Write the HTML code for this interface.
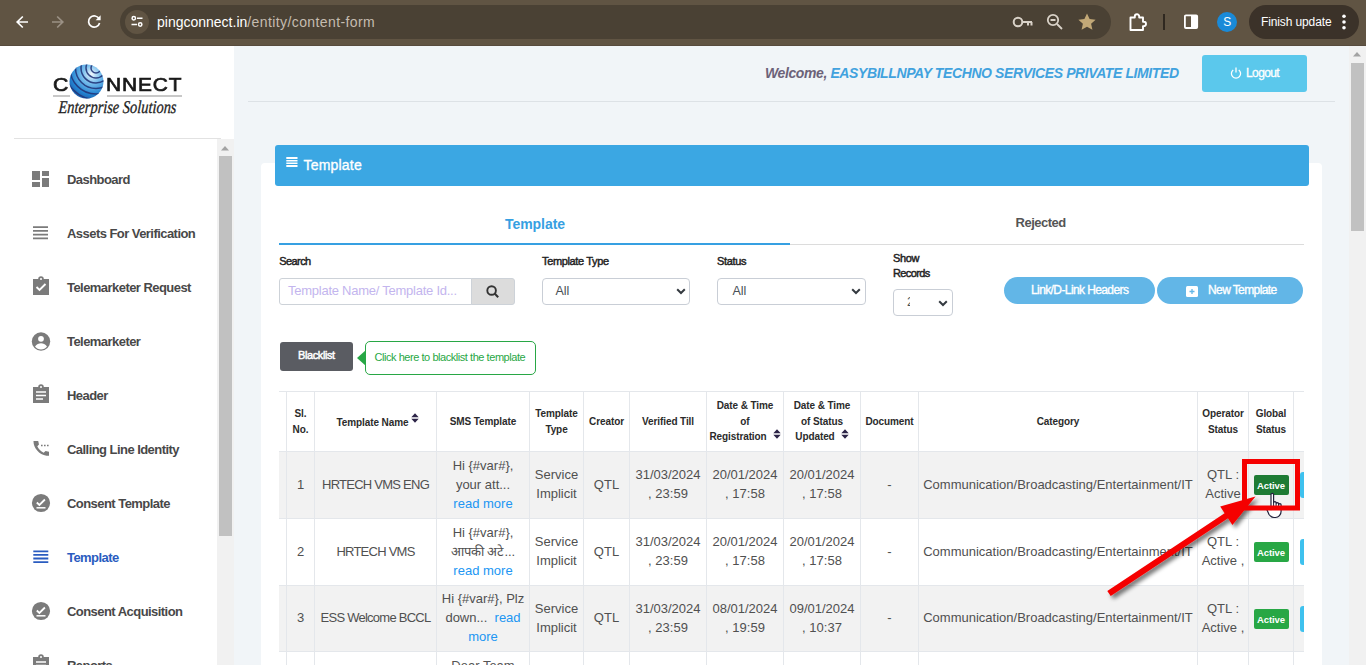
<!DOCTYPE html>
<html><head><meta charset="utf-8">
<style>
*{box-sizing:border-box;margin:0;padding:0}
html,body{width:1366px;height:665px;overflow:hidden;font-family:"Liberation Sans",sans-serif;background:#f1f5f8}
.abs{position:absolute}
#tb{position:absolute;left:0;top:0;width:1366px;height:46px;background:#605443;border-bottom:1px solid #574b3d}
#omni{position:absolute;left:120px;top:5px;width:991px;height:34px;border-radius:17px;background:#4a4134}
#side{position:absolute;left:0;top:46px;width:234px;height:619px;background:#fff}
#main{position:absolute;left:234px;top:46px;width:1132px;height:619px;background:#f1f5f8}
.mi{position:absolute;left:67px;font-size:13px;line-height:15px;letter-spacing:-0.55px;font-weight:bold;color:#484848;white-space:nowrap}
.ic{position:absolute;left:31px}
.cell{display:flex;align-items:center;justify-content:center;text-align:center;white-space:nowrap;overflow:hidden}
</style></head>
<body>
<!-- browser toolbar -->
<div id="tb">
  <svg class="abs" style="left:15px;top:15px" width="14" height="14" viewBox="0 0 14 14"><path d="M13 7H2.5M7.8 1.5L2.2 7 7.8 12.5" stroke="#fff" stroke-width="1.7" fill="none"/></svg>
  <svg class="abs" style="left:51px;top:15px" width="14" height="14" viewBox="0 0 14 14"><path d="M1 7h10.5M6.2 1.5L11.8 7 6.2 12.5" stroke="#9b9185" stroke-width="1.7" fill="none"/></svg>
  <svg class="abs" style="left:87px;top:14px" width="15" height="15" viewBox="0 0 15 15"><path d="M12.2 5A5.6 5.6 0 1 0 12.6 9" stroke="#fff" stroke-width="1.7" fill="none"/><path d="M13.6 1.2v5h-5z" fill="#fff"/></svg>
</div>
<div id="omni">
  <div class="abs" style="left:5px;top:5px;width:24px;height:24px;border-radius:12px;background:#605443"></div>
  <svg class="abs" style="left:9px;top:9px" width="16" height="16" viewBox="0 0 16 16"><circle cx="4.8" cy="4.3" r="1.7" stroke="#fff" stroke-width="1.5" fill="none"/><path d="M8 4.3h5.5M2.5 10.5h5.5" stroke="#fff" stroke-width="1.6"/><circle cx="11.2" cy="10.5" r="1.7" stroke="#fff" stroke-width="1.5" fill="none"/></svg>
  <div class="abs" style="left:37px;top:9px;font-size:14px;color:#fff;white-space:nowrap">pingconnect.in<span style="color:#c5bcb0;letter-spacing:0.4px">/entity/content-form</span></div>
</div>

<div class="abs" style="left:0;top:0">
  <svg class="abs" style="left:1012px;top:13px" width="22" height="18" viewBox="0 0 22 18"><circle cx="6" cy="9" r="4.3" stroke="#d9d2c8" stroke-width="2" fill="none"/><path d="M10 9h10M16 9v3.5M19.5 9v3.5" stroke="#d9d2c8" stroke-width="2" fill="none"/></svg>
  <svg class="abs" style="left:1045px;top:12px" width="20" height="20" viewBox="0 0 20 20"><circle cx="8" cy="8" r="5.2" stroke="#d9d2c8" stroke-width="1.8" fill="none"/><path d="M5.5 8h5M12 12l5 5" stroke="#d9d2c8" stroke-width="1.8" fill="none"/></svg>
  <svg class="abs" style="left:1077px;top:12px" width="20" height="20" viewBox="0 0 20 20"><path d="M10 1.5l2.6 5.6 6 .6-4.5 4.1 1.3 6L10 14.8l-5.4 3 1.3-6L1.4 7.7l6-.6z" fill="#c2a877"/></svg>
  <svg class="abs" style="left:1127px;top:11px" width="22" height="22" viewBox="0 0 22 22"><path d="M3.5 6.5h4.3v-1a2.2 2.2 0 0 1 4.4 0v1h3.8v4.2h.8a2.2 2.2 0 0 1 0 4.4h-.8v3.9H3.5z" stroke="#fff" stroke-width="1.9" fill="none" stroke-linejoin="round"/></svg>
  <div class="abs" style="left:1163px;top:14px;width:1.5px;height:16px;background:#2f2820"></div>
  <svg class="abs" style="left:1183px;top:14px" width="16" height="16" viewBox="0 0 16 16"><rect x="1.9" y="1.4" width="12.3" height="12.6" rx="1" stroke="#fff" stroke-width="1.8" fill="none"/><rect x="8" y="1.4" width="6.2" height="12.6" fill="#fff"/></svg>
  <div class="abs" style="left:1217.2px;top:12px;width:20px;height:20px;border-radius:50%;background:#1a8ad8;color:#fff;font-size:12px;text-align:center;line-height:20px">S</div>
  <div class="abs" style="left:1249px;top:5px;width:110px;height:34px;border-radius:17px;background:#3b3229"></div>
  <div class="abs" style="left:1261px;top:15px;font-size:12px;line-height:15px;color:#fff;white-space:nowrap;letter-spacing:-0.12px">Finish update</div>
  <svg class="abs" style="left:1340px;top:12px" width="8" height="20" viewBox="0 0 8 20"><circle cx="4" cy="4.2" r="1.8" fill="#fff"/><circle cx="4" cy="10" r="1.8" fill="#fff"/><circle cx="4" cy="15.8" r="1.8" fill="#fff"/></svg>
</div>
<div id="side">
  <!-- logo -->
  <div class="abs" style="left:52.5px;top:27.5px;font-size:19px;color:#1a1a1a;line-height:22px;-webkit-text-stroke:0.7px #1a1a1a;transform:scaleX(1.12);transform-origin:0 0">C</div>
  <div class="abs" style="left:105.5px;top:27.5px;font-size:19px;color:#1a1a1a;line-height:22px;-webkit-text-stroke:0.7px #1a1a1a;letter-spacing:0.8px;transform:scaleX(1.1);transform-origin:0 0">NNECT</div>
  <div class="abs" style="left:53px;top:49px;width:17px;height:1.5px;background:#c8c8c8"></div>
  <div class="abs" style="left:107px;top:49px;width:75px;height:1.5px;background:#c8c8c8"></div>
  <svg class="abs" style="left:69px;top:18px" width="35" height="35" viewBox="0 0 35 35"><defs><radialGradient id="gl" cx="0.65" cy="0.28" r="0.85"><stop offset="0" stop-color="#f2f8fd"/><stop offset="0.3" stop-color="#7cc0ee"/><stop offset="0.7" stop-color="#2384d2"/><stop offset="1" stop-color="#1a4f9c"/></radialGradient><clipPath id="gc"><circle cx="17.5" cy="17.5" r="17"/></clipPath></defs><circle cx="17.5" cy="17.5" r="17" fill="url(#gl)"/><g clip-path="url(#gc)" stroke="#23377a" stroke-width="1.5" fill="none" opacity="0.9"><circle cx="27" cy="4" r="5"/><circle cx="27" cy="4" r="10"/><circle cx="27" cy="4" r="15"/><circle cx="27" cy="4" r="20.5"/><circle cx="27" cy="4" r="26"/><circle cx="27" cy="4" r="31.5"/></g></svg>
  <div class="abs" style="left:58px;top:52px;line-height:19px;font-family:'Liberation Serif',serif;font-style:italic;font-size:18px;color:#1e1e1e;white-space:nowrap;letter-spacing:0px;-webkit-text-stroke:0.3px #1e1e1e;transform:scaleX(0.8) skewX(-4deg);transform-origin:0 100%">Enterprise Solutions</div>
  <div class="abs" style="left:14px;top:92px;width:207px;height:1px;background:#e2e2e2"></div>
  <!-- scrollbar -->
  <div class="abs" style="left:217px;top:93px;width:17px;height:526px;background:#f1f1f1"></div>
  <svg class="abs" style="left:220px;top:98px" width="10" height="8" viewBox="0 0 10 8"><path d="M1 6.5L5 2l4 4.5z" fill="#a3a3a3"/></svg>
  <div class="abs" style="left:219px;top:110px;width:13px;height:380px;background:#c1c1c1"></div>
<svg class="ic" style="top:124px" width="20" height="18" viewBox="0 0 20 18"><path d="M1 1h8v9H1zM11 1h7v5h-7zM1 12h8v5H1zM11 8h7v9h-7z" fill="#7b7b7b"/></svg><div class="mi" style="top:126px">Dashboard</div>
<svg class="ic" style="top:179px" width="20" height="16" viewBox="0 0 20 16"><path d="M2 2.2h15M2 5.9h15M2 9.6h15M2 13.3h15" stroke="#7b7b7b" stroke-width="1.8"/></svg><div class="mi" style="top:180px">Assets For Verification</div>
<svg class="ic" style="top:230px" width="20" height="20" viewBox="0 0 20 20"><path d="M2 3h5.2a2.8 2.8 0 0 1 5.6 0H18v16H2z" fill="#7b7b7b"/><circle cx="10" cy="3" r="1" fill="#fff"/><path d="M5.5 11l3 3 6-6" stroke="#fff" stroke-width="1.9" fill="none"/></svg><div class="mi" style="top:234px">Telemarketer Request</div>
<svg class="ic" style="top:286px" width="20" height="20" viewBox="0 0 20 20"><circle cx="10" cy="9.5" r="9.2" fill="#7b7b7b"/><circle cx="10" cy="6.8" r="2.9" fill="#fff"/><path d="M4 14.5c1.5-2.5 4-3.2 6-3.2s4.5.7 6 3.2c-1.5 2-3.5 3-6 3s-4.5-1-6-3z" fill="#fff"/></svg><div class="mi" style="top:288px">Telemarketer</div>
<svg class="ic" style="top:338px" width="20" height="20" viewBox="0 0 20 20"><path d="M2 3h5.2a2.8 2.8 0 0 1 5.6 0H18v16H2z" fill="#7b7b7b"/><circle cx="10" cy="3" r="1" fill="#fff"/><path d="M5 8h10M5 11.5h10M5 15h7" stroke="#fff" stroke-width="1.6"/></svg><div class="mi" style="top:342px">Header</div>
<svg class="ic" style="top:394px" width="20" height="18" viewBox="0 0 20 18"><path d="M2.5 1.5c0 6.5 5.5 13 13 14.2l2.5 0v-4l-3.5-.8-1.8 1.8C9.8 11.5 7.5 9 6.3 6.3L8 4.5 7.2 1H2.5z" fill="#7b7b7b"/><path d="M10 5.5h1.6M13 5.5h1.6M16 5.5h1.6" stroke="#7b7b7b" stroke-width="1.5"/></svg><div class="mi" style="top:396px">Calling Line Identity</div>
<svg class="ic" style="top:447px" width="20" height="20" viewBox="0 0 20 20"><circle cx="10" cy="10" r="9.1" fill="#7b7b7b"/><path d="M5.8 9.5l2.6 2.5 5.5-5.5" stroke="#fff" stroke-width="1.8" fill="none"/><path d="M5.5 14.8h9" stroke="#fff" stroke-width="1.5"/></svg><div class="mi" style="top:450px">Consent Template</div>
<svg class="ic" style="top:503px" width="20" height="16" viewBox="0 0 20 16"><path d="M2.3 2.3h15M2.3 5.9h15M2.3 9.5h15M2.3 13.1h15" stroke="#2a5cc0" stroke-width="1.8"/></svg><div class="mi" style="top:504px;color:#2a5cc0">Template</div>
<svg class="ic" style="top:555px" width="20" height="20" viewBox="0 0 20 20"><circle cx="10" cy="10" r="9.1" fill="#7b7b7b"/><path d="M5.8 9.5l2.6 2.5 5.5-5.5" stroke="#fff" stroke-width="1.8" fill="none"/><path d="M5.5 14.8h9" stroke="#fff" stroke-width="1.5"/></svg><div class="mi" style="top:558px">Consent Acquisition</div>
<svg class="ic" style="top:608px" width="20" height="20" viewBox="0 0 20 20"><path d="M2 3h5.2a2.8 2.8 0 0 1 5.6 0H18v16H2z" fill="#7b7b7b"/><circle cx="10" cy="3" r="1" fill="#fff"/><path d="M5 8h10M5 11.5h10" stroke="#fff" stroke-width="1.6"/></svg><div class="mi" style="top:612px">Reports</div>
</div>
<div id="main">
  <div class="abs" style="left:531px;top:19px;font-size:14px;line-height:16px;font-weight:bold;font-style:italic;white-space:nowrap;letter-spacing:-0.4px"><span style="color:#6c6278">Welcome, </span><span style="color:#41a2de">EASYBILLNPAY TECHNO SERVICES PRIVATE LIMITED</span></div>
  <div class="abs" style="left:968px;top:9px;width:105px;height:37px;border-radius:3px;background:#5bc8ec"></div>
  <svg class="abs" style="left:996px;top:21px" width="12" height="12" viewBox="0 0 12 12"><path d="M3.2 2.9A4.6 4.6 0 1 0 8.8 2.9" stroke="#fff" stroke-width="1.3" fill="none"/><path d="M6 0.6v5" stroke="#fff" stroke-width="1.3"/></svg>
  <div class="abs" style="left:1012px;top:20px;font-size:12px;line-height:14px;color:#fff;letter-spacing:-0.6px;-webkit-text-stroke:0.3px #fff">Logout</div>
  <div class="abs" style="left:14px;top:55px;width:1087px;height:1px;background:#dde2e6"></div>
  <!-- card -->
  <div class="abs" style="left:27px;top:117px;width:1061px;height:510px;background:#fff;border-radius:4px"></div>
  <div class="abs" style="left:41px;top:99px;width:1034px;height:41px;background:#3ba7e3;border-radius:3px"></div>
  <svg class="abs" style="left:51.5px;top:110px" width="12" height="12" viewBox="0 0 12 12"><rect x="0.3" y="1" width="11.2" height="2" fill="#fff"/><rect x="0.3" y="4" width="11.2" height="1.5" fill="#fff"/><rect x="0.3" y="6.5" width="11.2" height="1.5" fill="#fff"/><rect x="0.3" y="9" width="11.2" height="2" fill="#fff"/></svg>
  <div class="abs" style="left:69.5px;top:111px;font-size:14px;line-height:17px;color:#fff;letter-spacing:0.2px;-webkit-text-stroke:0.35px #fff">Template</div>
<!-- CONTENT -->
<div class="abs" style="left:271.0px;top:170.1px;font-size:14px;line-height:16px;font-weight:bold;color:#36a0e2;white-space:nowrap;letter-spacing:-0.05px;">Template</div>
<div class="abs" style="left:781.6px;top:169.0px;font-size:13px;line-height:15px;font-weight:bold;color:#555;white-space:nowrap;letter-spacing:-0.5px;">Rejected</div>
<div class="abs" style="left:45.0px;top:197.0px;width:511px;height:2px;background:#36a0e2"></div>
<div class="abs" style="left:556.0px;top:198.0px;width:514px;height:1px;background:#dcdcdc"></div>
<div class="abs" style="left:45.3px;top:209.0px;font-size:11px;line-height:13px;color:#222;white-space:nowrap;letter-spacing:-0.6px;-webkit-text-stroke:0.45px #222;">Search</div>
<div class="abs" style="left:308.0px;top:209.0px;font-size:11px;line-height:13px;color:#222;white-space:nowrap;letter-spacing:-0.35px;-webkit-text-stroke:0.45px #222;">Template Type</div>
<div class="abs" style="left:483.0px;top:209.3px;font-size:11px;line-height:13px;color:#222;white-space:nowrap;letter-spacing:-0.35px;-webkit-text-stroke:0.45px #222;">Status</div>
<div class="abs" style="left:659.0px;top:205.7px;font-size:11px;line-height:13px;color:#222;white-space:nowrap;letter-spacing:-0.35px;-webkit-text-stroke:0.45px #222;">Show</div>
<div class="abs" style="left:659.0px;top:220.7px;font-size:11px;line-height:13px;color:#222;white-space:nowrap;letter-spacing:-0.6px;-webkit-text-stroke:0.45px #222;">Records</div>
<div class="abs" style="left:45.0px;top:232.0px;width:193px;height:27px;border:1px solid #cdd2d8;border-radius:3px 0 0 3px;background:#fff"></div>
<div class="abs" style="left:54.0px;top:236.5px;font-size:13px;line-height:15px;color:#c3b5ee;white-space:nowrap;letter-spacing:-0.25px;">Template Name/ Template Id...</div>
<div class="abs" style="left:237.0px;top:232.0px;width:44px;height:27px;border:1px solid #cdd2d8;border-radius:0 3px 3px 0;background:#dcdcdc"></div>
<svg class="abs" style="left:252px;top:239px" width="14" height="13" viewBox="0 0 14 13"><circle cx="5.6" cy="5.5" r="4.3" stroke="#333" stroke-width="1.9" fill="none"/><path d="M8.6 8.6l3.6 3.6" stroke="#333" stroke-width="2.1"/></svg>
<div class="abs" style="left:308.0px;top:232.0px;width:148px;height:27px;border:1px solid #c9ced6;border-radius:4px;background:#fff"></div>
<svg class="abs" style="left:441.5px;top:242px" width="10" height="7" viewBox="0 0 10 7"><path d="M1.2 1.3L5 5l3.8-3.7" stroke="#343a40" stroke-width="2" fill="none"/></svg>
<div class="abs" style="left:321.5px;top:238.2px;font-size:12.5px;line-height:15px;color:#495057;white-space:nowrap;letter-spacing:0px;">All</div>
<div class="abs" style="left:483.0px;top:232.0px;width:149px;height:27px;border:1px solid #c9ced6;border-radius:4px;background:#fff"></div>
<svg class="abs" style="left:617px;top:242px" width="10" height="7" viewBox="0 0 10 7"><path d="M1.2 1.3L5 5l3.8-3.7" stroke="#343a40" stroke-width="2" fill="none"/></svg>
<div class="abs" style="left:498.5px;top:238.2px;font-size:12.5px;line-height:15px;color:#495057;white-space:nowrap;letter-spacing:0px;">All</div>
<div class="abs" style="left:659.0px;top:243.0px;width:60px;height:27px;border:1px solid #c9ced6;border-radius:4px;background:#fff"></div>
<svg class="abs" style="left:704px;top:253.5px" width="10" height="7" viewBox="0 0 10 7"><path d="M1.2 1.3L5 5l3.8-3.7" stroke="#343a40" stroke-width="2" fill="none"/></svg>
<div class="abs" style="left:673px;top:251px;width:3px;height:10px;overflow:hidden;font-size:12.5px;line-height:10px;color:#495057">2</div>
<div class="abs" style="left:770.0px;top:231.0px;width:151px;height:27px;border-radius:14px;background:#62b6e7"></div>
<div class="abs" style="left:797.0px;top:237.3px;font-size:12px;line-height:14px;color:#fff;white-space:nowrap;letter-spacing:-0.6px;-webkit-text-stroke:0.35px #fff;">Link/D-Link Headers</div>
<div class="abs" style="left:923.0px;top:231.0px;width:146px;height:27px;border-radius:14px;background:#62b6e7"></div>
<div class="abs" style="left:951.5px;top:239.5px;width:12.5px;height:11.5px;border-radius:1.5px;background:#fff"></div>
<svg class="abs" style="left:953px;top:241px" width="10" height="9" viewBox="0 0 10 9"><path d="M2.5 4.5h5M5 2v5" stroke="#62b6e7" stroke-width="1.3"/></svg>
<div class="abs" style="left:974.0px;top:237.3px;font-size:12px;line-height:14px;color:#fff;white-space:nowrap;letter-spacing:-0.6px;-webkit-text-stroke:0.35px #fff;">New Template</div>
<div class="abs" style="left:46.0px;top:296.0px;width:73px;height:29px;border-radius:3px;background:#5a5c62"></div>
<div class="abs" style="left:64.0px;top:303.0px;font-size:11px;line-height:13px;color:#fff;white-space:nowrap;letter-spacing:-0.4px;-webkit-text-stroke:0.45px #fff;">Blacklist</div>
<svg class="abs" style="left:122px;top:303px" width="12" height="18" viewBox="0 0 12 18"><path d="M1 9L10 1v16z" fill="#28a745"/></svg>
<div class="abs" style="left:131.0px;top:295.0px;width:171px;height:34px;border:1px solid #28a745;border-radius:5px;background:#fff"></div>
<div class="abs" style="left:140.5px;top:304.9px;font-size:11px;line-height:13px;color:#28a745;white-space:nowrap;letter-spacing:-0.45px;">Click here to blacklist the template</div>
<div class="abs" style="left:45px;top:405px;width:1025px;height:67px;background:#f2f2f2"></div>
<div class="abs" style="left:45px;top:472px;width:1025px;height:67px;background:#fff"></div>
<div class="abs" style="left:45px;top:539px;width:1025px;height:66px;background:#f2f2f2"></div>
<div class="abs" style="left:45px;top:605px;width:1025px;height:69px;background:#fff"></div>
<div class="abs" style="left:45px;top:345px;width:1025px;height:1px;background:#e4e7eb"></div>
<div class="abs" style="left:45px;top:405px;width:1025px;height:1px;background:#e4e7eb"></div>
<div class="abs" style="left:45px;top:472px;width:1025px;height:1px;background:#e4e7eb"></div>
<div class="abs" style="left:45px;top:539px;width:1025px;height:1px;background:#e4e7eb"></div>
<div class="abs" style="left:45px;top:605px;width:1025px;height:1px;background:#e4e7eb"></div>
<div class="abs" style="left:52px;top:345px;width:1px;height:274px;background:#e4e7eb"></div>
<div class="abs" style="left:80px;top:345px;width:1px;height:274px;background:#e4e7eb"></div>
<div class="abs" style="left:202px;top:345px;width:1px;height:274px;background:#e4e7eb"></div>
<div class="abs" style="left:295px;top:345px;width:1px;height:274px;background:#e4e7eb"></div>
<div class="abs" style="left:349px;top:345px;width:1px;height:274px;background:#e4e7eb"></div>
<div class="abs" style="left:395px;top:345px;width:1px;height:274px;background:#e4e7eb"></div>
<div class="abs" style="left:472px;top:345px;width:1px;height:274px;background:#e4e7eb"></div>
<div class="abs" style="left:549px;top:345px;width:1px;height:274px;background:#e4e7eb"></div>
<div class="abs" style="left:626px;top:345px;width:1px;height:274px;background:#e4e7eb"></div>
<div class="abs" style="left:684px;top:345px;width:1px;height:274px;background:#e4e7eb"></div>
<div class="abs" style="left:963px;top:345px;width:1px;height:274px;background:#e4e7eb"></div>
<div class="abs" style="left:1014px;top:345px;width:1px;height:274px;background:#e4e7eb"></div>
<div class="abs" style="left:1059px;top:345px;width:1px;height:274px;background:#e4e7eb"></div>
<div class="abs cell" style="left:46px;top:346px;width:6px;height:59px;font-size:10px;line-height:15.5px;font-weight:bold;color:#2b2b2b;letter-spacing:-0.1px"><div></div></div>
<div class="abs cell" style="left:53px;top:346px;width:27px;height:59px;font-size:10px;line-height:15.5px;font-weight:bold;color:#2b2b2b;letter-spacing:-0.1px"><div>Sl.<br>No.</div></div>
<div class="abs cell" style="left:81px;top:346px;width:121px;height:59px;font-size:10px;line-height:15.5px;font-weight:bold;color:#2b2b2b;letter-spacing:-0.1px;padding-left:5px"><div>Template Name<svg width="8" height="10" viewBox="0 0 8 10" style="vertical-align:2.5px;margin-left:3px;display:inline-block"><path d="M0.3 4.2L4 0.3 7.7 4.2zM0.3 5.8L4 9.7 7.7 5.8z" fill="#2d2548"/></svg></div></div>
<div class="abs cell" style="left:203px;top:346px;width:92px;height:59px;font-size:10px;line-height:15.5px;font-weight:bold;color:#2b2b2b;letter-spacing:-0.1px"><div>SMS Template</div></div>
<div class="abs cell" style="left:296px;top:346px;width:53px;height:59px;font-size:10px;line-height:15.5px;font-weight:bold;color:#2b2b2b;letter-spacing:-0.1px"><div>Template<br>Type</div></div>
<div class="abs cell" style="left:350px;top:346px;width:45px;height:59px;font-size:10px;line-height:15.5px;font-weight:bold;color:#2b2b2b;letter-spacing:-0.1px"><div>Creator</div></div>
<div class="abs cell" style="left:396px;top:346px;width:76px;height:59px;font-size:10px;line-height:15.5px;font-weight:bold;color:#2b2b2b;letter-spacing:-0.1px"><div>Verified Till</div></div>
<div class="abs cell" style="left:473px;top:346px;width:76px;height:59px;font-size:10px;line-height:15.5px;font-weight:bold;color:#2b2b2b;letter-spacing:-0.1px"><div>Date &amp; Time<br>of<br>Registration<svg width="8" height="10" viewBox="0 0 8 10" style="vertical-align:1px;margin-left:6px;display:inline-block"><path d="M0.3 4.2L4 0.3 7.7 4.2zM0.3 5.8L4 9.7 7.7 5.8z" fill="#2d2548"/></svg></div></div>
<div class="abs cell" style="left:550px;top:346px;width:76px;height:59px;font-size:10px;line-height:15.5px;font-weight:bold;color:#2b2b2b;letter-spacing:-0.1px"><div>Date &amp; Time<br>of Status<br>Updated<svg width="8" height="10" viewBox="0 0 8 10" style="vertical-align:1px;margin-left:6px;display:inline-block"><path d="M0.3 4.2L4 0.3 7.7 4.2zM0.3 5.8L4 9.7 7.7 5.8z" fill="#2d2548"/></svg></div></div>
<div class="abs cell" style="left:627px;top:346px;width:57px;height:59px;font-size:10px;line-height:15.5px;font-weight:bold;color:#2b2b2b;letter-spacing:-0.1px"><div>Document</div></div>
<div class="abs cell" style="left:685px;top:346px;width:278px;height:59px;font-size:10px;line-height:15.5px;font-weight:bold;color:#2b2b2b;letter-spacing:-0.1px"><div>Category</div></div>
<div class="abs cell" style="left:964px;top:346px;width:50px;height:59px;font-size:10px;line-height:15.5px;font-weight:bold;color:#2b2b2b;letter-spacing:-0.1px"><div>Operator<br>Status</div></div>
<div class="abs cell" style="left:1015px;top:346px;width:44px;height:59px;font-size:10px;line-height:15.5px;font-weight:bold;color:#2b2b2b;letter-spacing:-0.1px"><div>Global<br>Status</div></div>
<div class="abs cell" style="left:1060px;top:346px;width:36px;height:59px;font-size:10px;line-height:15.5px;font-weight:bold;color:#2b2b2b;letter-spacing:-0.1px"><div></div></div>
<div class="abs cell" style="left:46px;top:406px;width:6px;height:66px;font-size:13px;line-height:19px;color:#505050;padding-bottom:2px"><div></div></div>
<div class="abs cell" style="left:53px;top:406px;width:27px;height:66px;font-size:13px;line-height:19px;color:#505050;padding-bottom:2px"><div>1</div></div>
<div class="abs cell" style="left:81px;top:406px;width:121px;height:66px;font-size:13px;line-height:19px;color:#505050;padding-bottom:2px;letter-spacing:-0.75px"><div>HRTECH VMS ENG</div></div>
<div class="abs cell" style="left:203px;top:406px;width:92px;height:66px;font-size:13px;line-height:19px;color:#505050;padding-bottom:2px"><div>Hi {#var#},<br>your att...<br><span style="color:#2196f3">read more</span></div></div>
<div class="abs cell" style="left:296px;top:406px;width:53px;height:66px;font-size:13px;line-height:19px;color:#505050;padding-bottom:2px"><div>Service<br>Implicit</div></div>
<div class="abs cell" style="left:350px;top:406px;width:45px;height:66px;font-size:13px;line-height:19px;color:#505050;padding-bottom:2px"><div>QTL</div></div>
<div class="abs cell" style="left:396px;top:406px;width:76px;height:66px;font-size:13px;line-height:19px;color:#505050;padding-bottom:2px"><div>31/03/2024<br>, 23:59</div></div>
<div class="abs cell" style="left:473px;top:406px;width:76px;height:66px;font-size:13px;line-height:19px;color:#505050;padding-bottom:2px"><div>20/01/2024<br>, 17:58</div></div>
<div class="abs cell" style="left:550px;top:406px;width:76px;height:66px;font-size:13px;line-height:19px;color:#505050;padding-bottom:2px"><div>20/01/2024<br>, 17:58</div></div>
<div class="abs cell" style="left:627px;top:406px;width:57px;height:66px;font-size:13px;line-height:19px;color:#505050;padding-bottom:2px"><div>-</div></div>
<div class="abs cell" style="left:685px;top:406px;width:278px;height:66px;font-size:13px;line-height:19px;color:#505050;padding-bottom:2px"><div>Communication/Broadcasting/Entertainment/IT</div></div>
<div class="abs cell" style="left:964px;top:406px;width:50px;height:66px;font-size:13px;line-height:19px;color:#505050;padding-bottom:2px"><div>QTL :<br>Active</div></div>
<div class="abs cell" style="left:1015px;top:406px;width:44px;height:66px;font-size:13px;line-height:19px;color:#505050;padding-bottom:2px"><div><div style="width:35px;height:20px;margin-top:2px;border-radius:2px;background:#1e7b34;color:#fff;font-size:9.5px;font-weight:bold;line-height:22px;letter-spacing:-0.1px">Active</div></div></div>
<div class="abs cell" style="left:1060px;top:406px;width:36px;height:66px;font-size:13px;line-height:19px;color:#505050;padding-bottom:2px"><div></div></div>
<div class="abs cell" style="left:46px;top:473px;width:6px;height:66px;font-size:13px;line-height:19px;color:#505050;padding-bottom:2px"><div></div></div>
<div class="abs cell" style="left:53px;top:473px;width:27px;height:66px;font-size:13px;line-height:19px;color:#505050;padding-bottom:2px"><div>2</div></div>
<div class="abs cell" style="left:81px;top:473px;width:121px;height:66px;font-size:13px;line-height:19px;color:#505050;padding-bottom:2px;letter-spacing:-0.75px"><div>HRTECH VMS</div></div>
<div class="abs cell" style="left:203px;top:473px;width:92px;height:66px;font-size:13px;line-height:19px;color:#505050;padding-bottom:2px"><div>Hi {#var#},<br>आपकी अटे...<br><span style="color:#2196f3">read more</span></div></div>
<div class="abs cell" style="left:296px;top:473px;width:53px;height:66px;font-size:13px;line-height:19px;color:#505050;padding-bottom:2px"><div>Service<br>Implicit</div></div>
<div class="abs cell" style="left:350px;top:473px;width:45px;height:66px;font-size:13px;line-height:19px;color:#505050;padding-bottom:2px"><div>QTL</div></div>
<div class="abs cell" style="left:396px;top:473px;width:76px;height:66px;font-size:13px;line-height:19px;color:#505050;padding-bottom:2px"><div>31/03/2024<br>, 23:59</div></div>
<div class="abs cell" style="left:473px;top:473px;width:76px;height:66px;font-size:13px;line-height:19px;color:#505050;padding-bottom:2px"><div>20/01/2024<br>, 17:58</div></div>
<div class="abs cell" style="left:550px;top:473px;width:76px;height:66px;font-size:13px;line-height:19px;color:#505050;padding-bottom:2px"><div>20/01/2024<br>, 17:58</div></div>
<div class="abs cell" style="left:627px;top:473px;width:57px;height:66px;font-size:13px;line-height:19px;color:#505050;padding-bottom:2px"><div>-</div></div>
<div class="abs cell" style="left:685px;top:473px;width:278px;height:66px;font-size:13px;line-height:19px;color:#505050;padding-bottom:2px"><div>Communication/Broadcasting/Entertainment/IT</div></div>
<div class="abs cell" style="left:964px;top:473px;width:50px;height:66px;font-size:13px;line-height:19px;color:#505050;padding-bottom:2px"><div>QTL :<br>Active ,</div></div>
<div class="abs cell" style="left:1015px;top:473px;width:44px;height:66px;font-size:13px;line-height:19px;color:#505050;padding-bottom:2px"><div><div style="width:35px;height:20px;margin-top:2px;border-radius:2px;background:#28a745;color:#fff;font-size:9.5px;font-weight:bold;line-height:22px;letter-spacing:-0.1px">Active</div></div></div>
<div class="abs cell" style="left:1060px;top:473px;width:36px;height:66px;font-size:13px;line-height:19px;color:#505050;padding-bottom:2px"><div></div></div>
<div class="abs cell" style="left:46px;top:540px;width:6px;height:65px;font-size:13px;line-height:19px;color:#505050;padding-bottom:2px"><div></div></div>
<div class="abs cell" style="left:53px;top:540px;width:27px;height:65px;font-size:13px;line-height:19px;color:#505050;padding-bottom:2px"><div>3</div></div>
<div class="abs cell" style="left:81px;top:540px;width:121px;height:65px;font-size:13px;line-height:19px;color:#505050;padding-bottom:2px;letter-spacing:-0.75px"><div>ESS Welcome BCCL</div></div>
<div class="abs cell" style="left:203px;top:540px;width:92px;height:65px;font-size:13px;line-height:19px;color:#505050;padding-bottom:2px"><div>Hi {#var#}, Plz<br>down... &nbsp;<span style="color:#2196f3">read</span><br><span style="color:#2196f3">more</span></div></div>
<div class="abs cell" style="left:296px;top:540px;width:53px;height:65px;font-size:13px;line-height:19px;color:#505050;padding-bottom:2px"><div>Service<br>Implicit</div></div>
<div class="abs cell" style="left:350px;top:540px;width:45px;height:65px;font-size:13px;line-height:19px;color:#505050;padding-bottom:2px"><div>QTL</div></div>
<div class="abs cell" style="left:396px;top:540px;width:76px;height:65px;font-size:13px;line-height:19px;color:#505050;padding-bottom:2px"><div>31/03/2024<br>, 23:59</div></div>
<div class="abs cell" style="left:473px;top:540px;width:76px;height:65px;font-size:13px;line-height:19px;color:#505050;padding-bottom:2px"><div>08/01/2024<br>, 19:59</div></div>
<div class="abs cell" style="left:550px;top:540px;width:76px;height:65px;font-size:13px;line-height:19px;color:#505050;padding-bottom:2px"><div>09/01/2024<br>, 10:37</div></div>
<div class="abs cell" style="left:627px;top:540px;width:57px;height:65px;font-size:13px;line-height:19px;color:#505050;padding-bottom:2px"><div>-</div></div>
<div class="abs cell" style="left:685px;top:540px;width:278px;height:65px;font-size:13px;line-height:19px;color:#505050;padding-bottom:2px"><div>Communication/Broadcasting/Entertainment/IT</div></div>
<div class="abs cell" style="left:964px;top:540px;width:50px;height:65px;font-size:13px;line-height:19px;color:#505050;padding-bottom:2px"><div>QTL :<br>Active ,</div></div>
<div class="abs cell" style="left:1015px;top:540px;width:44px;height:65px;font-size:13px;line-height:19px;color:#505050;padding-bottom:2px"><div><div style="width:35px;height:20px;margin-top:2px;border-radius:2px;background:#28a745;color:#fff;font-size:9.5px;font-weight:bold;line-height:22px;letter-spacing:-0.1px">Active</div></div></div>
<div class="abs cell" style="left:1060px;top:540px;width:36px;height:65px;font-size:13px;line-height:19px;color:#505050;padding-bottom:2px"><div></div></div>
<div class="abs" style="left:203px;top:610px;width:92px;text-align:center;font-size:13px;line-height:19px;color:#555">Dear Team</div>
<div class="abs" style="left:1066px;top:426px;width:4px;height:26px;border-radius:3px 0 0 3px;background:#3ec1ee"></div>
<div class="abs" style="left:1066px;top:493px;width:4px;height:26px;border-radius:3px 0 0 3px;background:#3ec1ee"></div>
<div class="abs" style="left:1066px;top:560px;width:4px;height:26px;border-radius:3px 0 0 3px;background:#3ec1ee"></div>
<!-- /CONTENT -->
</div>
<!-- page scrollbar -->
<div class="abs" style="left:1349px;top:46px;width:17px;height:619px;background:#f1f1f1"></div>
<svg class="abs" style="left:1352px;top:50px" width="10" height="8" viewBox="0 0 10 8"><path d="M1 6.5L5 2l4 4.5z" fill="#a3a3a3"/></svg>
<div class="abs" style="left:1351px;top:63px;width:13px;height:168px;background:#c1c1c1"></div>

<!-- ANNOT -->
<svg class="abs" style="left:1265px;top:491px" width="22" height="28" viewBox="0 0 22 28"><path d="M6 3.5c0-1.6 2.6-1.6 2.6 0v8.2c0-1.4 2.5-1.4 2.5 0v1c0-1.4 2.5-1.4 2.5 0v1c0-1.4 2.5-1.4 2.5 0v6.5c0 3.5-2.5 6.3-5.6 6.3h-1.5c-2.4 0-3.7-1.2-5-3L1.5 17.8c-.9-1.3.8-2.8 2-1.6L6 18.5z" fill="#fff" stroke="#20203a" stroke-width="1.2" stroke-linejoin="round"/><path d="M8.6 12v5M11.1 13v4.5M13.6 14v4" stroke="#20203a" stroke-width="1"/></svg>
<svg class="abs" style="left:0;top:0" width="1366" height="665" viewBox="0 0 1366 665"><defs><filter id="sh" x="-20%" y="-20%" width="140%" height="140%"><feGaussianBlur in="SourceAlpha" stdDeviation="2"/><feOffset dx="3" dy="3"/><feComponentTransfer><feFuncA type="linear" slope="0.55"/></feComponentTransfer><feMerge><feMergeNode/><feMergeNode in="SourceGraphic"/></feMerge></filter></defs><g filter="url(#sh)"><path d="M1107.3 591L1224.6 513.3 1220.2 506.6 1255.5 496.5 1232.4 525 1228 518.3 1110.7 596z" fill="#f50000"/></g><rect x="1244.5" y="461.5" width="53" height="46.5" fill="none" stroke="#f50000" stroke-width="5"/></svg>
<!-- /ANNOT -->
</body></html>
